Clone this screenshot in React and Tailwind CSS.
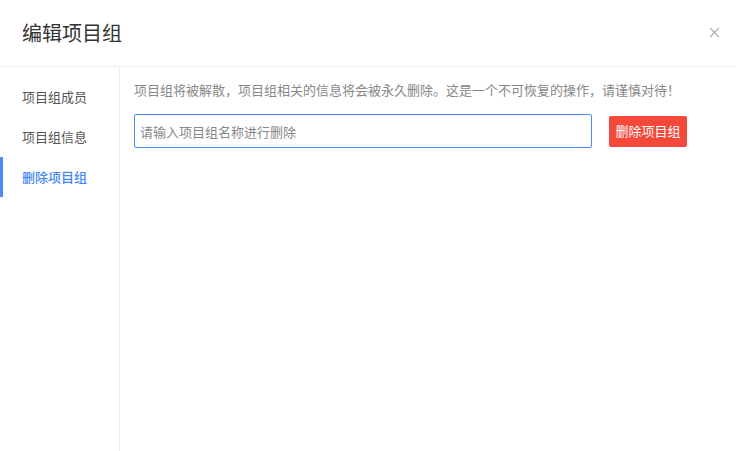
import React from 'react'

const navItems = ['项目组成员', '项目组信息', '删除项目组']

const CloseIcon = () => (
    <svg width="11" height="11" viewBox="0 0 11 11" className="text-[#b0b0b0]">
        <path d="M1 1L10 10M10 1L1 10" stroke="currentColor" strokeWidth="1.2" />
    </svg>
)

export default function App() {
    const active = 2
    return (
        <div className="w-[736px] h-[451px] bg-white flex flex-col font-['Noto_Sans_CJK_SC','Noto_Sans',sans-serif] overflow-hidden">
            <div className="h-[67px] flex items-center justify-between pl-[22px] pr-[12px] border-b border-[#eeeeee] shrink-0">
                <h1 className="text-[20px] text-[#333] leading-none">编辑项目组</h1>
                <button className="p-1 -mt-[1px]"><CloseIcon /></button>
            </div>
            <div className="flex flex-1 min-h-0">
                <div className="w-[120px] border-r border-[#f0f0f0] pt-[10px] shrink-0">
                    {navItems.map((item, index) => (
                        <div
                            key={item}
                            className={
                                index === active
                                    ? 'h-[40px] flex items-center pl-[19px] text-[13px] text-[#4285f4] font-medium border-l-[3px] border-[#4a8cf7]'
                                    : 'h-[40px] flex items-center pl-[22px] text-[13px] text-[#555]'
                            }
                        >
                            {item}
                        </div>
                    ))}
                </div>
                <div className="flex-1 pl-[14px] pr-[49px] pt-[13px]">
                    <p className="text-[13px] text-[#888] leading-[20px] whitespace-nowrap">
                        项目组将被解散，项目组相关的信息将会被永久删除。这是一个不可恢复的操作，请谨慎对待！
                    </p>
                    <div className="flex items-center mt-[14px] gap-[17px]">
                        <input
                            className="w-[458px] h-[34px] shrink-0 border border-[#4a8cf7] rounded-[2px] px-[5px] text-[13px] text-[#333] placeholder:text-[#888] outline-none"
                            placeholder="请输入项目组名称进行删除"
                        />
                        <button className="w-[78px] h-[31px] shrink-0 whitespace-nowrap bg-[#f5483b] text-white text-[13px] rounded-[2px]">
                            删除项目组
                        </button>
                    </div>
                </div>
            </div>
        </div>
    )
}
